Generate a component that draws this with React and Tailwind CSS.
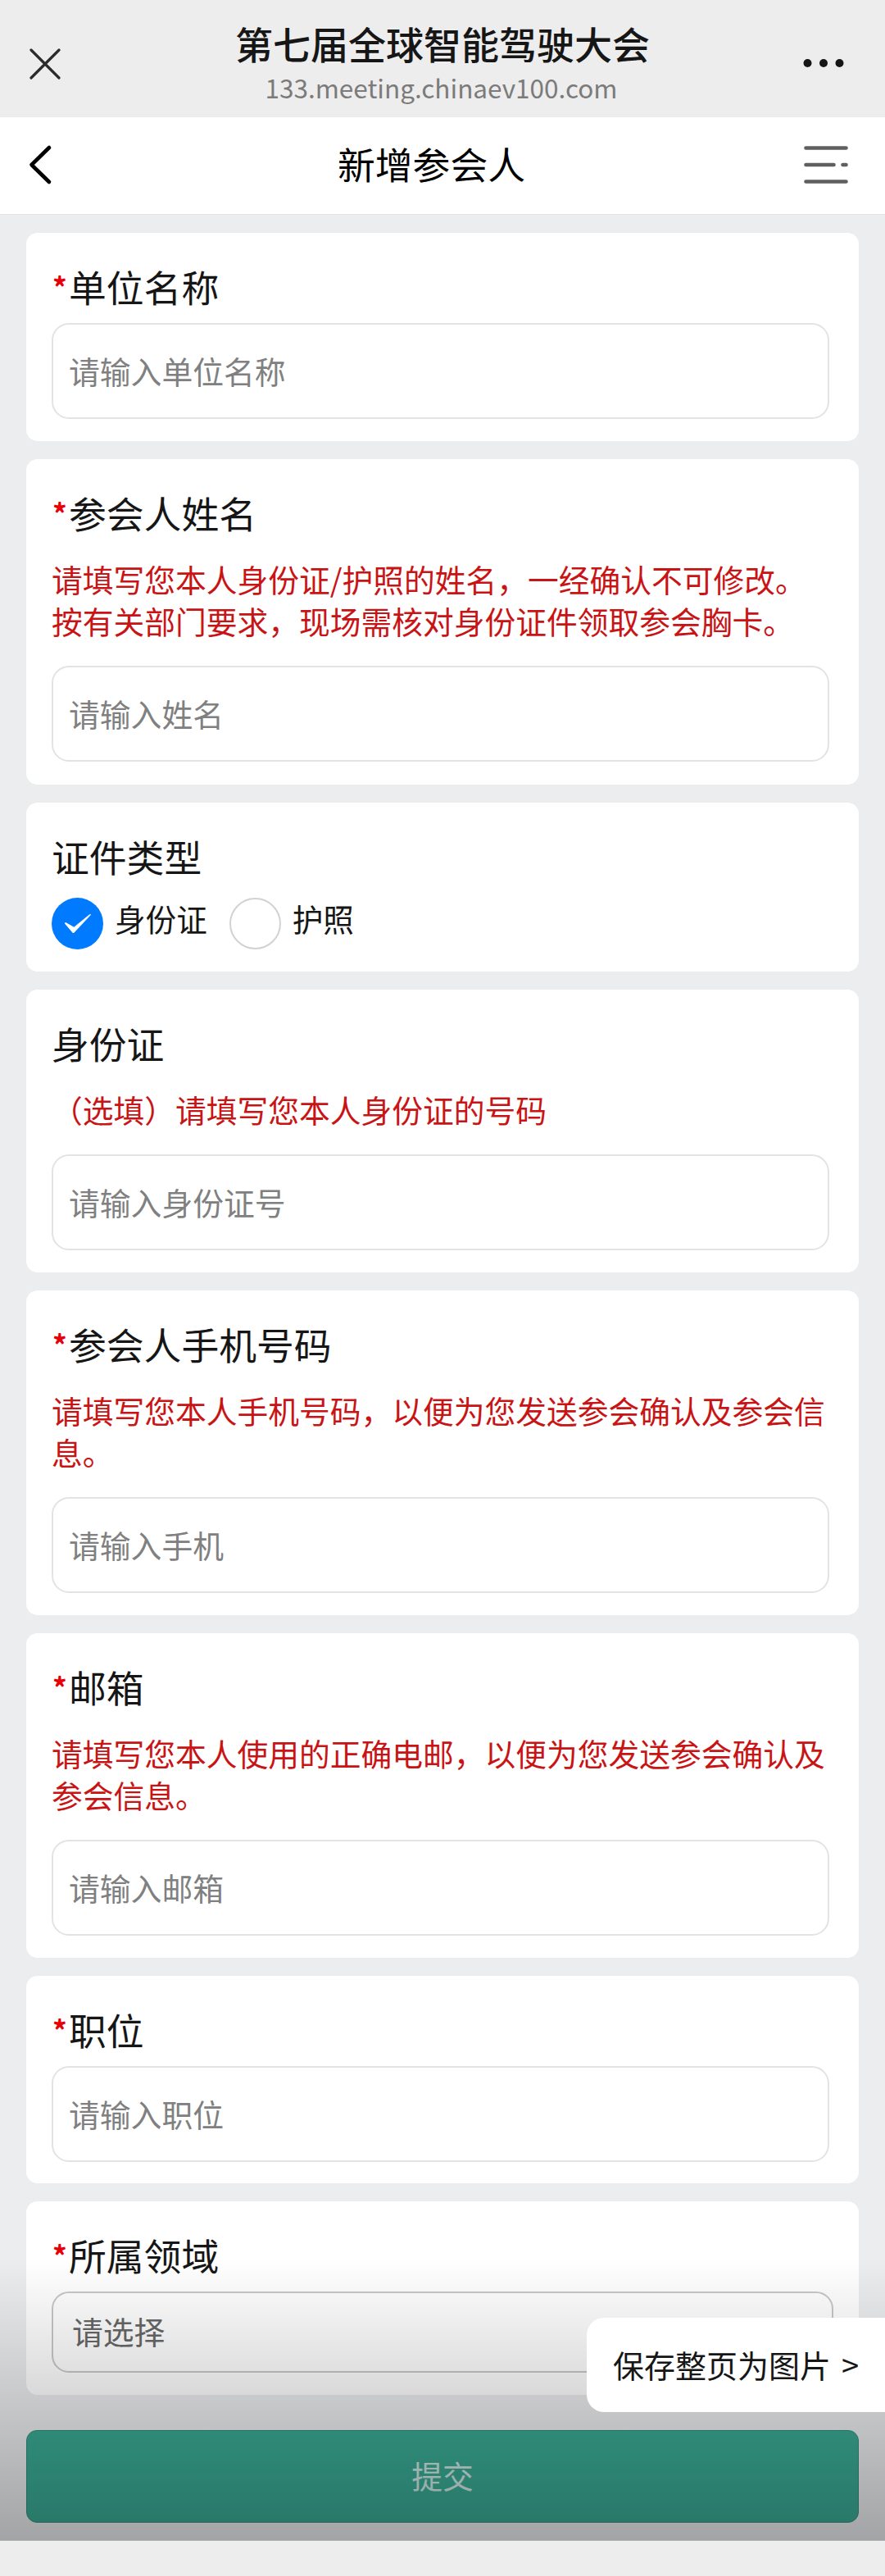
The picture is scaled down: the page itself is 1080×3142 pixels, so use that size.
const fields = [
  { label: "单位名称", required: true, placeholder: "请输入单位名称", height: "h-[254px]" },
  {
    label: "参会人姓名",
    required: true,
    hint: [
      "请填写您本人身份证/护照的姓名，一经确认不可修改。",
      "按有关部门要求，现场需核对身份证件领取参会胸卡。",
    ],
    placeholder: "请输入姓名",
    height: "h-[397px]",
  },
  { label: "证件类型", options: ["身份证", "护照"], height: "h-[206px]" },
  {
    label: "身份证",
    hint: ["（选填）请填写您本人身份证的号码"],
    placeholder: "请输入身份证号",
    height: "h-[345px]",
  },
  {
    label: "参会人手机号码",
    required: true,
    hint: ["请填写您本人手机号码，以便为您发送参会确认及参会信", "息。"],
    placeholder: "请输入手机",
    height: "h-[396px]",
  },
  {
    label: "邮箱",
    required: true,
    hint: ["请填写您本人使用的正确电邮，以便为您发送参会确认及", "参会信息。"],
    placeholder: "请输入邮箱",
    height: "h-[396px]",
  },
  { label: "职位", required: true, placeholder: "请输入职位", height: "h-[253px]" },
  { label: "所属领域", required: true, select: "请选择", height: "h-[236px]" },
];

function BrowserBar() {
  return (
    <header className="flex h-[143px] items-start justify-between bg-[#ededed] px-9">
      <svg className="mt-[59px] h-[38px] w-[38px]" viewBox="0 0 38 38" fill="none" stroke="#2b2b2b" strokeWidth="3.2" strokeLinecap="round">
        <path d="M2 2 36 36M36 2 2 36" />
      </svg>
      <div className="flex flex-col items-center pl-[26px]">
        <h1 className="mt-[19px] text-[46px] leading-[66px] font-medium text-[#161616]">第七届全球智能驾驶大会</h1>
        <p className="mt-px -ml-[3px] text-[31.5px] leading-[40px] text-[#7b7b7b]">133.meeting.chinaev100.com</p>
      </div>
      <svg className="mt-[67px] mr-[14px] h-5 w-[50px]" viewBox="0 0 50 20" fill="#161616">
        <circle cx="5.5" cy="10" r="5" />
        <circle cx="25" cy="10" r="5" />
        <circle cx="44.5" cy="10" r="5" />
      </svg>
    </header>
  );
}

function NavBar() {
  return (
    <nav className="flex h-[118px] items-center justify-between bg-white pr-[45px] pb-[3px] pl-[34px]">
      <svg className="h-[50px] w-[30px]" viewBox="0 0 30 50" fill="none" stroke="#000" strokeWidth="4.6" strokeLinecap="round" strokeLinejoin="round">
        <path d="M26 4 4.5 25 26 46" />
      </svg>
      <h2 className="mb-[3px] pl-[8px] text-[45.8px] leading-[66px] text-black">新增参会人</h2>
      <svg className="h-[48px] w-[54px]" viewBox="0 0 54 48" fill="none" stroke="#5f5f5f" strokeWidth="4.6" strokeLinecap="round">
        <path d="M2.5 3.5h49M2.5 24h34M47.5 24h4M2.5 44.5h49" />
      </svg>
    </nav>
  );
}

function Radio({ label, checked }) {
  return (
    <label className="flex items-start">
      {checked ? (
        <svg className="h-[63px] w-[63px]" viewBox="0 0 63 63">
          <circle cx="31.5" cy="31.5" r="31.5" fill="#007aff" />
          <path d="M16 31.6q-.6-1.7 1.6-1.4l9.7 5.6L46 20.4q1.6-1 2 .3L27.6 42.5q-1.1 1.2-2.2 0z" fill="#fff" />
        </svg>
      ) : (
        <span className="h-[63px] w-[63px] rounded-full border-2 border-[#d2d2d2]" />
      )}
      <span className="ml-[14px] text-[37.6px] leading-[49px] text-[#161616]">{label}</span>
    </label>
  );
}

function Field({ label, required, hint, placeholder, options, select, height }) {
  return (
    <section className={`rounded-[14px] bg-white pt-[35px] pr-9 pl-[31px] ${height}`}>
      <div className="flex h-[60px] items-center text-[45.8px] leading-[60px] text-[#161616]">
        {required && <span className="w-[21px] pl-px text-[35px] leading-[52px] font-bold text-[#e60008]">*</span>}
        {label}
      </div>
      {hint && (
        <div className="mt-[25px] mb-[30px] text-[37.75px] leading-[51px] whitespace-nowrap text-[#c91416]">
          {hint.map((line) => (
            <p key={line}>{line}</p>
          ))}
        </div>
      )}
      {placeholder && (
        <input
          className="mt-[15px] block h-[117px] w-full rounded-[21px] border-2 border-[#e3e3e3] px-[19px] pb-[3px] text-[37.8px] placeholder:text-[#808080]"
          placeholder={placeholder}
        />
      )}
      {options && (
        <div className="mt-[21px] flex gap-[27px]">
          {options.map((option, i) => (
            <Radio key={option} label={option} checked={i === 0} />
          ))}
        </div>
      )}
      {select && (
        <div className="mt-[15px] -mr-[5px] h-[99px] rounded-[21px] border-2 border-[#c8c8c8] px-[23px] text-[37.8px] leading-[91px] text-[#686868]">
          {select}
        </div>
      )}
    </section>
  );
}

export default function App() {
  return (
    <div className="relative flex h-[3142px] w-[1080px] flex-col overflow-hidden bg-[#ecedef] font-['Noto_Sans_CJK_SC',sans-serif]">
      <BrowserBar />
      <NavBar />
      <main className="flex grow flex-col gap-[22px] border-t border-[#e2e3e4] px-8 pt-[22px]">
        {fields.map((field) => (
          <Field key={field.label} {...field} />
        ))}
        <button className="mt-[21px] h-[113px] rounded-[13px] border border-[#3a8a7c] bg-[#3aaa94] pb-[3px] text-[37.8px] text-white/75">
          提交
        </button>
      </main>
      <footer className="h-[43px] bg-[#ededed]" />
      <div className="pointer-events-none absolute inset-x-0 bottom-[43px] h-[344px] bg-linear-to-b from-black/0 to-black/31" />
      <a className="absolute top-[2827px] right-0 flex h-[115px] w-[364px] items-center gap-[13px] rounded-l-[21px] bg-white pb-[3px] pl-[32px] text-[38px] whitespace-nowrap text-[#161616]">
        保存整页为图片 <span>&gt;</span>
      </a>
    </div>
  );
}
